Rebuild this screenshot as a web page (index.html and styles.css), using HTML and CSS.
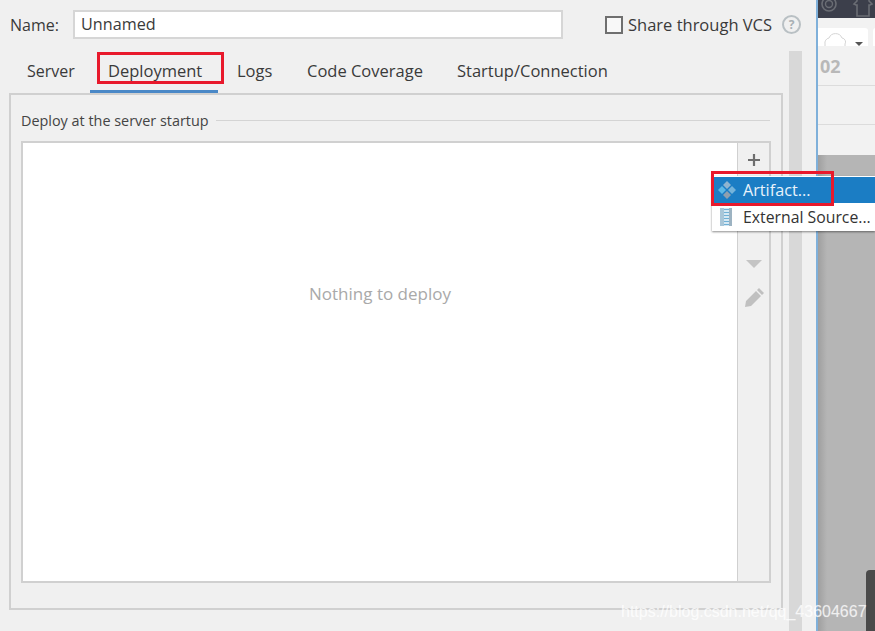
FILE: index.html
```html
<!DOCTYPE html>
<html lang="en">
<head>
<meta charset="utf-8">
<title>Run Configuration</title>
<link rel="stylesheet" href="styles.css">
</head>
<body>
<div class="app">
  <main class="dialog">
    <div class="name-row">
      <label class="name-label">Name:</label>
      <div class="name-input">Unnamed</div>
      <div class="share">
        <span class="checkbox"></span>
        <span class="share-text">Share through VCS</span>
        <span class="help">?</span>
      </div>
    </div>
    <div class="body-row">
      <div class="main-col">
        <nav class="tabs">
          <span class="tab t-server">Server</span>
          <span class="tab t-deploy">Deployment</span>
          <span class="tab t-logs">Logs</span>
          <span class="tab t-code">Code Coverage</span>
          <span class="tab t-startup">Startup/Connection</span>
        </nav>
        <section class="panel">
          <div class="legend"><span>Deploy at the server startup</span><i class="rule"></i></div>
          <div class="list-box">
            <div class="list-area">Nothing to deploy</div>
            <div class="toolbar">
              <svg class="tool" width="16" height="16" viewBox="0 0 16 16"><path d="M8 2v12M2 8h12" stroke="#6e6e6e" stroke-width="2.2"/></svg>
              <svg class="tool tool-arrow" width="16" height="9" viewBox="0 0 16 9"><path d="M0 0h16L8 8z" fill="#c4c4c4"/></svg>
              <svg class="tool tool-pen" width="20" height="20" viewBox="0 0 20 20"><path d="M1 19l1-6L12 3l5 5L7 18zM13 2l2-2 5 5-2 2z" fill="#c0c0c0"/></svg>
            </div>
          </div>
        </section>
      </div>
      <div class="scrollbar"></div>
    </div>
  </main>
  <aside class="behind">
    <div class="behind-top">
      <svg width="57" height="18" viewBox="0 0 57 18"><circle cx="9" cy="4" r="7" fill="none" stroke="#6a6d74" stroke-width="1.6"/><circle cx="9" cy="4" r="3.5" fill="none" stroke="#6a6d74" stroke-width="1.4"/><path d="M37 0v1l-3 3 2 1h1v11h12V5h1l2-1-3-3V0" fill="none" stroke="#6a6d74" stroke-width="1.6"/></svg>
    </div>
    <div class="behind-tools">
      <div class="chip"><svg width="26" height="18" viewBox="0 0 26 18"><path d="M3 18V13a5 5 0 0 1 4-6 7 7 0 0 1 13 0 4 4 0 0 1 3 6v5" fill="none" stroke="#d4d4d4"/></svg><i class="caret"></i></div>
      <div class="chip chip-next"></div>
    </div>
    <div class="behind-num">02</div>
    <div class="behind-strip"></div>
    <div class="behind-band"></div>
    <div class="behind-gray"><div class="dark-bar"></div></div>
  </aside>
  <div class="menu">
    <div class="menu-item active">
      <svg width="18" height="18" viewBox="0 0 18 18"><path d="M9 0l4 4-4 4-4-4z" fill="#8fb4cf"/><path d="M4 5l4 4-4 4-4-4z" fill="#5cb8e6"/><path d="M14 5l4 4-4 4-4-4z" fill="#74b3da"/><path d="M9 10l4 4-4 4-4-4z" fill="#8f9fae"/></svg>
      <span>Artifact...</span>
    </div>
    <div class="menu-item">
      <svg width="18" height="18" viewBox="0 0 18 18"><rect x="2" y="0" width="4" height="18" fill="#a9c6d8"/><rect x="6" y="0" width="5" height="18" fill="#d5e8f3"/><path d="M6 1.500h5M6 4.500h5M6 7.500h5M6 10.500h5M6 13.500h5M6 16.500h5" stroke="#6fb0d6"/><rect x="11" y="0" width="3" height="18" fill="#9db3c2"/></svg>
      <span>External Source...</span>
    </div>
  </div>
  <div class="mark mark-tab"></div>
  <div class="mark mark-menu"></div>
  <div class="watermark">https://blog.csdn.net/qq_43604667</div>
</div>
</body>
</html>
```
FILE: styles.css
```css
* { box-sizing: border-box; }
html, body { margin: 0; padding: 0; }
body { font-family: "Open Sans", "Noto Sans", sans-serif; color: #3a3a3a; }
.app { position: relative; width: 875px; height: 631px; overflow: hidden; display: flex; background: #f0f0f0; }
.dialog { width: 816px; height: 631px; flex: none; background: #f0f0f0; display: flex; flex-direction: column; padding: 10px 0 0 9px; }
.name-row { display: flex; align-items: center; height: 29px; flex: none; }
.name-label { font-size: 16px; width: 63px; margin-left: 1px; }
.name-input { width: 490px; height: 29px; background: #fff; border: 2px solid #d6d6d6; padding-left: 6px; font-size: 16.2px; line-height: 24px; }
.share { display: flex; align-items: center; margin-left: 42px; }
.checkbox { width: 18px; height: 18px; border: 2px solid #6f6f6f; background: #f8f8f8; }
.share-text { font-size: 16.500px; margin-left: 5px; white-space: nowrap; }
.help { width: 19px; height: 19px; margin-left: 10px; border: 2px solid #b9c0c4; border-radius: 50%; color: #a9b0b5; font-size: 12px; font-weight: 700; line-height: 15px; text-align: center; }
.body-row { display: flex; flex: 1; min-height: 0; }
.main-col { width: 774px; flex: none; }
.tabs { position: relative; height: 54px; }
.tab { position: absolute; top: 20px; font-size: 16.500px; white-space: nowrap; }
.t-server { left: 18px; font-size: 16px; top: 21px; }
.t-deploy { left: 99px; }
.t-logs { left: 228px; }
.t-code { left: 298px; }
.t-startup { left: 448px; }
.t-deploy::after { content: ""; position: absolute; left: -18px; right: -16px; top: 31px; height: 3px; background: #4a88c7; }
.panel { height: 517px; border: 2px solid #d0d0d0; padding: 15px 0 0 10px; }
.legend { display: flex; align-items: center; gap: 7px; font-size: 14.400px; height: 20px; padding-right: 11px; color: #444; }
.legend .rule { flex: 1; height: 1px; background: #d4d4d4; }
.list-box { display: flex; margin-top: 11px; width: 750px; height: 442px; border: 2px solid #d0d0d0; }
.list-area { width: 715px; background: #fff; border-right: 1px solid #d0d0d0; display: flex; align-items: center; justify-content: center; color: #a9a9a9; font-size: 17px; padding-bottom: 138px; }
.toolbar { flex: 1; position: relative; }
.tool { position: absolute; left: 8px; top: 9px; }
.tool-arrow { top: 117px; }
.tool-pen { left: 6px; top: 145px; }
.scrollbar { width: 13px; margin-left: 6px; margin-top: 12px; background: #d8d8d8; }
.behind { flex: 1; position: relative; border-left: 2px solid #7fb0da; display: flex; flex-direction: column; background: #f2f2f2; }
.behind-top { height: 18px; background: #3c3f4b; overflow: hidden; flex: none; }
.behind-top svg { display: block; margin-left: 2px; }
.behind-tools { height: 29px; flex: none; background: #f2f2f2; position: relative; }
.chip { position: absolute; left: 0; top: 10px; width: 50px; height: 18px; background: #fff; border-radius: 0 3px 0 0; overflow: hidden; }
.chip-next { left: 55px; width: 10px; border-radius: 3px 0 0 0; }
.chip svg { position: absolute; left: 4px; top: 3px; }
.caret { position: absolute; left: 37px; top: 14px; border: 4px solid transparent; border-top: 4px solid #555; border-bottom: 0; }
.behind-num { height: 39px; flex: none; padding: 6px 0 0 2px; font-size: 18px; line-height: 26px; font-weight: 700; color: #b8b8b8; border-bottom: 1px solid #dcdcdc; }
.behind-strip { height: 39px; flex: none; border-bottom: 1px solid #dcdcdc; }
.behind-band { height: 30px; flex: none; }
.behind-gray { flex: 1; background: linear-gradient(90deg, #9f9f9f, #b5b5b5 9px); position: relative; }
.dark-bar { position: absolute; left: 48px; top: 415px; width: 11px; height: 61px; background: #4a4a4a; border-radius: 4px 0 0 0; }
.menu { position: absolute; left: 712px; top: 176px; width: 163px; height: 55px; background: #fff; box-shadow: 0 1px 2px rgba(0,0,0,.45); padding-top: 1px; }
.menu-item { height: 26px; display: flex; align-items: center; gap: 7px; padding-left: 6px; font-size: 15.800px; color: #333; white-space: nowrap; margin-bottom: 1px; }
.menu-item.active { background: #1b7dc4; color: #e8f3fb; font-size: 16.200px; }
.mark { position: absolute; border: 3px solid #e8192c; pointer-events: none; }
.mark-tab { left: 97px; top: 52px; width: 127px; height: 32px; }
.mark-menu { left: 711px; top: 171px; width: 123px; height: 35px; }
.watermark { position: absolute; left: 621px; top: 603px; font-family: "Liberation Sans", sans-serif; font-size: 16px; color: rgba(255,255,255,.72); white-space: nowrap; text-shadow: 0 0 1px rgba(255,255,255,.3); }
```
